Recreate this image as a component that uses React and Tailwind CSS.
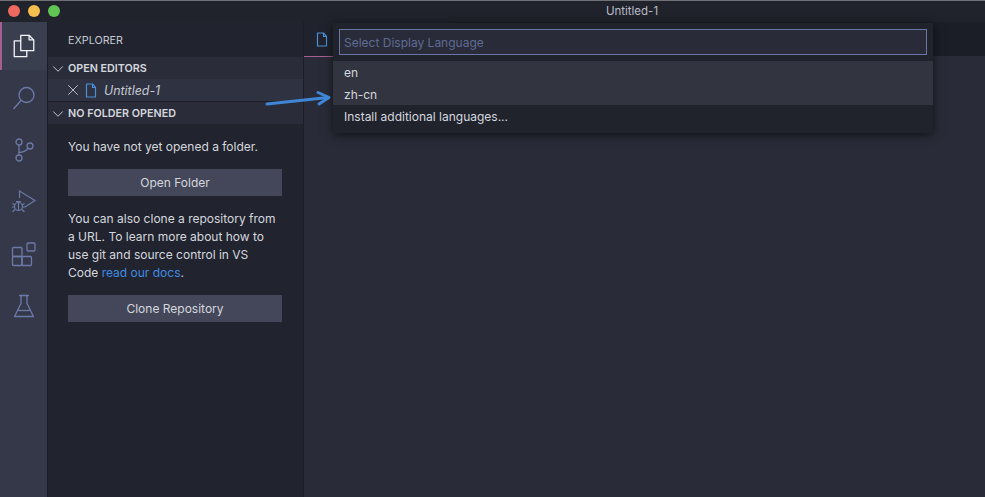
import React from "react";
import { ChevronDown, X } from "lucide-react";

const FileIcon = ({ className }) => (
  <svg viewBox="2.5 0.5 11 15" fill="none" stroke="currentColor" strokeWidth="1.2" className={className}>
    <path d="M3.5 1.5h6l3 3.5v9.5h-9z" strokeLinejoin="round" />
    <path d="M9.5 1.5v3.5h3" strokeLinejoin="round" />
  </svg>
);

const ActivityIcon = ({ active, children }) => (
  <div className={`relative flex items-center justify-center ${active ? "h-[48px] text-[#f2f3f7] bg-[#3a3f50]" : "h-[52px] mt-[2px] -mb-[2px] text-[#6b7aa8]"}`}>
    {active && <div className="absolute left-0 top-0 bottom-0 w-[2px] bg-[#a5608f]" />}
    {children}
  </div>
);

const SectionHeader = ({ title }) => (
  <div className="h-[22px] flex items-center bg-[#2a2d39] text-[#d5d7df] font-semibold text-[10.75px] pt-[2px]">
    <ChevronDown className="w-[18px] h-[18px] ml-[1px] -mt-[1px] text-[#c5c8d2]" strokeWidth={1.3} />
    <span className="ml-[1px]">{title}</span>
  </div>
);

const SideButton = ({ label }) => (
  <button className="w-[214px] h-[27px] bg-[#434759] text-[#d5d7df] text-[12px] flex items-center justify-center pt-px">
    {label}
  </button>
);

export default function App() {
  return (
    <div className="relative w-[985px] h-[497px] overflow-hidden bg-[#292c38] font-['Inter',sans-serif] text-[#d5d7df] flex flex-col">
      {/* Title bar */}
      <div className="relative h-[22px] shrink-0 bg-[#20232c] border-t border-[#6f7075] flex items-center justify-center pl-[279px]">
        <div className="absolute left-[8px] top-[4px] flex gap-[8px]">
          <div className="w-[12px] h-[12px] rounded-full bg-[#ee6a5f]" />
          <div className="w-[12px] h-[12px] rounded-full bg-[#f5bf4f]" />
          <div className="w-[12px] h-[12px] rounded-full bg-[#61c554]" />
        </div>
        <span className="text-[11.5px] text-[#b9bbc4]">Untitled-1</span>
      </div>

      <div className="flex flex-1 min-h-0">
        {/* Activity bar */}
        <div className="w-[47px] shrink-0 bg-[#343848] flex flex-col">
          <ActivityIcon active>
            <svg viewBox="0 0 28 28" fill="none" stroke="currentColor" strokeWidth="1.4" strokeLinejoin="round" className="w-[26px] h-[26px]">
              <path d="M10.5 2.5h9l5 5v11.5h-14z" />
              <path d="M19.5 2.5v5h5" />
              <path d="M10.5 8.5h-7v17h13.5v-6.5" />
            </svg>
          </ActivityIcon>
          <ActivityIcon>
            <svg viewBox="0 0 26 26" fill="none" stroke="currentColor" strokeWidth="1.3" className="w-[26px] h-[26px]">
              <circle cx="15.5" cy="10" r="7.5" />
              <path d="M10 15.5 2.5 24" />
            </svg>
          </ActivityIcon>
          <ActivityIcon>
            <svg viewBox="0 0 24 26" fill="none" stroke="currentColor" strokeWidth="1.3" className="w-[24px] h-[26px]">
              <circle cx="7" cy="5" r="3" />
              <circle cx="7" cy="21" r="3" />
              <circle cx="18" cy="9" r="3" />
              <path d="M7 8v10M7 15.5c4 0 8-2 9-4.5" />
            </svg>
          </ActivityIcon>
          <ActivityIcon>
            <svg viewBox="0 0 26 26" fill="none" stroke="currentColor" strokeWidth="1.2" className="w-[26px] h-[26px]">
              <path d="M8.5 9V2l15.5 9.5-10 6.5" />
              <circle cx="7.5" cy="17.5" r="4" />
              <path d="M5 12.5h5M1.5 14.5 4 16M13.5 14.5 11 16M1 18h3M11 18h3M1.5 23 4 20.5M13.5 23 11 20.5M7.5 14v8" />
            </svg>
          </ActivityIcon>
          <ActivityIcon>
            <svg viewBox="0 0 26 26" fill="none" stroke="currentColor" strokeWidth="1.3" strokeLinejoin="round" className="w-[26px] h-[26px]">
              <rect x="1.5" y="6.5" width="9.5" height="9" rx="1" />
              <rect x="1.5" y="15.5" width="9.5" height="9" rx="1" />
              <rect x="11" y="15.5" width="9.5" height="9" rx="1" />
              <rect x="16" y="2" width="8" height="8" rx="1" />
            </svg>
          </ActivityIcon>
          <ActivityIcon>
            <svg viewBox="0 0 24 26" fill="none" stroke="currentColor" strokeWidth="1.3" strokeLinejoin="round" className="w-[24px] h-[26px]">
              <path d="M7 2.5h10M9 2.5v8L2.5 23.5h19L15 10.5v-8" />
              <path d="M5.5 17.5h13" />
            </svg>
          </ActivityIcon>
        </div>

        {/* Sidebar */}
        <div className="w-[257px] shrink-0 bg-[#21242e] border-l border-r border-[#1c1e26] flex flex-col">
          <div className="h-[35px] pl-[20px] pt-[4px] flex items-center text-[10.75px] text-[#c5c8d2]">EXPLORER</div>
          <SectionHeader title="OPEN EDITORS" />
          <div className="h-[22px] flex items-center bg-[#2f3341]">
            <X className="w-[18px] h-[18px] ml-[16px] text-[#d5d7df]" strokeWidth={1.1} />
            <FileIcon className="w-[12px] h-[15px] ml-[3px] text-[#4b8fd6]" />
            <span className="ml-[7px] pt-[2px] italic text-[12.4px] text-[#c5c8d2]">Untitled-1</span>
          </div>
          <div className="h-px bg-[#1c1e26]" />
          <SectionHeader title="NO FOLDER OPENED" />
          <div className="pl-[20px] pr-[20px] pt-[14px] text-[12px] leading-[18px]">
            <p>You have not yet opened a folder.</p>
            <div className="mt-[13px]"><SideButton label="Open Folder" /></div>
            <p className="mt-[14px]">
              You can also clone a repository from<br />
              a URL. To learn more about how to<br />
              use git and source control in VS<br />
              Code <span className="text-[#3f8ae2]">read our docs</span>.
            </p>
            <div className="mt-[13px]"><SideButton label="Clone Repository" /></div>
          </div>
        </div>

        {/* Editor */}
        <div className="flex-1 flex flex-col">
          <div className="h-[34px] bg-[#1b1e27] flex">
            <div className="w-[150px] h-[35px] bg-[#20232d] border-b border-[#a5608f] pl-[12px] flex items-center">
              <FileIcon className="w-[12px] h-[15px] text-[#4b8fd6]" />
            </div>
          </div>
        </div>
      </div>

      {/* Language picker */}
      <div className="absolute left-[333px] top-[23px] w-[600px] h-[110px] bg-[#20232c] shadow-[0_2px_10px_rgba(0,0,0,0.6)] flex flex-col text-[12px]">
        <div className="h-[38px] px-[6px] flex items-start pt-[6px]">
          <div className="w-full h-[26px] bg-[#292c38] border border-[#6a76a6] px-[4px] pt-px flex items-center text-[#5f6a94]">
            Select Display Language
          </div>
        </div>
        <div className="bg-[#32353f]">
          <div className="h-[22px] pl-[11px] pt-px flex items-center">en</div>
          <div className="h-[22px] pl-[11px] pt-px flex items-center">zh-cn</div>
        </div>
        <div className="h-[22px] pl-[11px] pt-px flex items-center">Install additional languages...</div>
      </div>

      {/* Annotation arrow */}
      <svg viewBox="0 0 68 20" fill="none" stroke="#3f86d6" strokeWidth="3" strokeLinecap="round" strokeLinejoin="round" className="absolute left-[265px] top-[89px] w-[68px] h-[20px]">
        <path d="M2 15 L63 8.5" />
        <path d="M53 3.5 L64 8.5 L54 15" />
      </svg>
    </div>
  );
}
